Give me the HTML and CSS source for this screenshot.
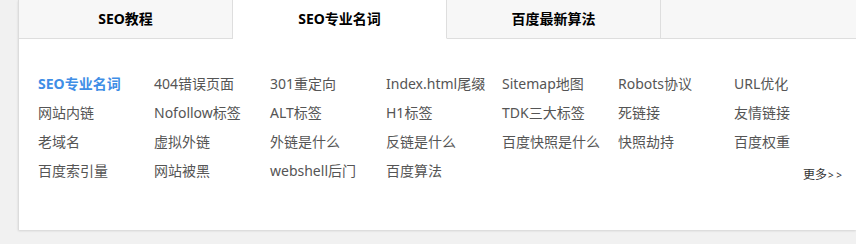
FILE: index.html
```html
<!DOCTYPE html>
<html lang="zh-CN">
<head>
<meta charset="utf-8">
<title>SEO专业名词</title>
<link rel="stylesheet" href="styles.css">
</head>
<body>
<div class="panel">
  <div class="tabs">
    <div class="tab">SEO教程</div>
    <div class="tab active">SEO专业名词</div>
    <div class="tab">百度最新算法</div>
    <div class="tab rest"></div>
  </div>
  <div class="content">
    <div class="grid">
      <a class="item current">SEO专业名词</a>
      <a class="item">404错误页面</a>
      <a class="item">301重定向</a>
      <a class="item">Index.html尾缀</a>
      <a class="item">Sitemap地图</a>
      <a class="item">Robots协议</a>
      <a class="item">URL优化</a>
      <a class="item">网站内链</a>
      <a class="item">Nofollow标签</a>
      <a class="item">ALT标签</a>
      <a class="item">H1标签</a>
      <a class="item">TDK三大标签</a>
      <a class="item">死链接</a>
      <a class="item">友情链接</a>
      <a class="item">老域名</a>
      <a class="item">虚拟外链</a>
      <a class="item">外链是什么</a>
      <a class="item">反链是什么</a>
      <a class="item">百度快照是什么</a>
      <a class="item">快照劫持</a>
      <a class="item">百度权重</a>
      <a class="item">百度索引量</a>
      <a class="item">网站被黑</a>
      <a class="item">webshell后门</a>
      <a class="item">百度算法</a>
      <a class="more">更多<span class="arrows">&gt; &gt;</span></a>
    </div>
  </div>
</div>
</body>
</html>
```
FILE: styles.css
```css
html, body {
  margin: 0;
  padding: 0;
}
body {
  background: #f1f1f1;
  font-family: "Noto Sans", "Noto Sans CJK SC", sans-serif;
  width: 856px;
  height: 244px;
  overflow: hidden;
}
.panel {
  margin-left: 18px;
  height: 230px;
  background: #fff;
  border-left: 1px solid #dcdcdc;
  box-shadow: 0 1px 2px rgba(0,0,0,0.12);
  overflow: hidden;
}
.tabs {
  display: flex;
  height: 38px;
}
.tab {
  width: 213px;
  flex: none;
  height: 38px;
  line-height: 38px;
  text-align: center;
  font-size: 14px;
  font-weight: bold;
  color: #000;
  background: #f7f7f7;
  border-right: 1px solid #dedede;
  border-bottom: 1px solid #dedede;
}
.tab.active {
  background: #fff;
  border-bottom-color: #fff;
}
.tab.rest {
  flex: 1;
  border-right: none;
}
.content {
  padding: 31px 0 0 19px;
}
.grid {
  display: grid;
  grid-template-columns: repeat(7, 116px);
  grid-auto-rows: 29px;
}
.item {
  font-size: 14px;
  line-height: 29px;
  color: #555;
  white-space: nowrap;
  text-decoration: none;
}
.item.current {
  color: #3f8ee6;
  font-weight: bold;
}
.more {
  grid-column: 7;
  grid-row: 4;
  padding-left: 69px;
  padding-top: 4px;
  font-size: 12px;
  line-height: 29px;
  color: #333;
  white-space: nowrap;
}
.arrows {
  font-size: 10px;
  margin-left: 1px;
}
```
